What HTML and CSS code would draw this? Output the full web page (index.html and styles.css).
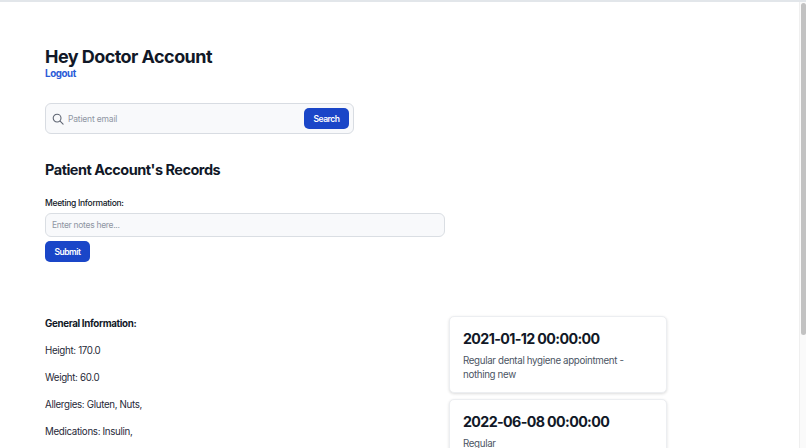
FILE: index.html
```html
<!DOCTYPE html>
<html lang="en">
<head>
<meta charset="utf-8">
<title>Doctor Account</title>
<link rel="stylesheet" href="styles.css">
</head>
<body>
<div class="page">
  <header class="intro">
    <h1>Hey Doctor Account</h1>
    <a class="logout" href="#">Logout</a>
  </header>
  <form class="search">
    <svg class="search-icon" viewBox="0 0 20 20" fill="none" stroke="currentColor" stroke-width="1.8" stroke-linecap="round"><circle cx="8.5" cy="8.5" r="6.5"/><path d="M13.5 13.5l5 5"/></svg>
    <input class="search-input" type="text" placeholder="Patient email">
    <button class="btn" type="button">Search</button>
  </form>
  <h2>Patient Account's Records</h2>
  <form class="notes">
    <label class="notes-label" for="notes">Meeting Information:</label>
    <input class="notes-input" id="notes" type="text" placeholder="Enter notes here...">
    <button class="btn submit" type="button">Submit</button>
  </form>
  <section class="columns">
    <div class="general">
      <p class="general-title">General Information:</p>
      <p>Height: 170.0</p>
      <p>Weight: 60.0</p>
      <p>Allergies: Gluten, Nuts,</p>
      <p>Medications: Insulin,</p>
    </div>
    <div class="cards">
      <article class="card">
        <h3>2021-01-12 00:00:00</h3>
        <p>Regular dental hygiene appointment - nothing new</p>
      </article>
      <article class="card">
        <h3>2022-06-08 00:00:00</h3>
        <p>Regular</p>
      </article>
    </div>
  </section>
</div>
<div class="scrollbar"><div class="thumb"></div></div>
</body>
</html>
```

FILE: styles.css
```css
* { box-sizing: border-box; }
html, body { margin: 0; height: 448px; overflow: hidden; background: #fff; }
body { font-family: Inter, "Liberation Sans", sans-serif; color: #111827; border-top: 2px solid #e2e6ea; }
.page { padding: 44px 0 0 45px; }
h1 { margin: 0; font-size: 18px; line-height: 22px; font-weight: 700; letter-spacing: -.55px; }
.logout { display: block; margin-top: -1px; font-size: 9.75px; line-height: 14px; font-weight: 700; letter-spacing: -.38px; color: #2a5bd7; text-decoration: none; }
.search { display: flex; align-items: center; width: 309px; height: 31px; margin-top: 22px; padding: 0 4px 0 6px; background: #f8f9fb; border: 1px solid #d8dce2; border-radius: 6px; }
.search-icon { width: 12px; height: 12px; color: #5f6673; flex: none; }
.search-input { flex: 1; min-width: 0; margin-left: 4px; border: 0; padding: 0; background: transparent; font: 400 8.5px Inter, sans-serif; letter-spacing: -.18px; }
input::placeholder { color: #8f96a3; opacity: 1; }
.btn { display: block; height: 21px; width: 45px; padding: 0; border: 0; border-radius: 5px; background: #1a46c8; color: #fff; font: 600 8.5px Inter, sans-serif; letter-spacing: -.5px; }
h2 { margin: 27px 0 0; font-size: 14.5px; line-height: 18px; font-weight: 700; letter-spacing: -.5px; }
.notes { margin-top: 17px; }
.notes-label { display: block; font-size: 8.5px; line-height: 14px; font-weight: 500; letter-spacing: -.3px; }
.notes-input { display: block; width: 400px; height: 24px; margin-top: 3px; padding: 0 6px; background: #f8f9fb; border: 1px solid #dadee3; border-radius: 6px; font: 400 8.5px Inter, sans-serif; letter-spacing: -.3px; }
.submit { margin-top: 4px; }
.columns { display: flex; margin-top: 56px; }
.general { width: 404px; font-size: 9.75px; line-height: 14px; letter-spacing: -.33px; color: #1f2937; }
.general p { margin: 0 0 13px; }
.general .general-title { margin-top: -1px; font-weight: 700; color: #111827; }
.cards { width: 218px; display: flex; flex-direction: column; gap: 6px; margin-top: -2px; }
.card { padding: 13px 13px 11px; background: #fff; border: 1px solid #eceef1; border-radius: 5px; box-shadow: 0 1px 3px rgba(0,0,0,.14); }
.card h3 { margin: 0; font-size: 14.25px; line-height: 17px; font-weight: 700; letter-spacing: -.63px; }
.card p { margin: 7px 0 0; font-size: 9.75px; line-height: 13.5px; letter-spacing: -.35px; color: #4b5563; }
.scrollbar { position: fixed; top: 2px; right: 0; bottom: 0; width: 7px; background: #fafafa; border-left: 1px solid #efefef; }
.thumb { width: 5px; height: 332px; margin: 1px 0 0 1px; background: #c2c2c2; border-radius: 3px; }
```
